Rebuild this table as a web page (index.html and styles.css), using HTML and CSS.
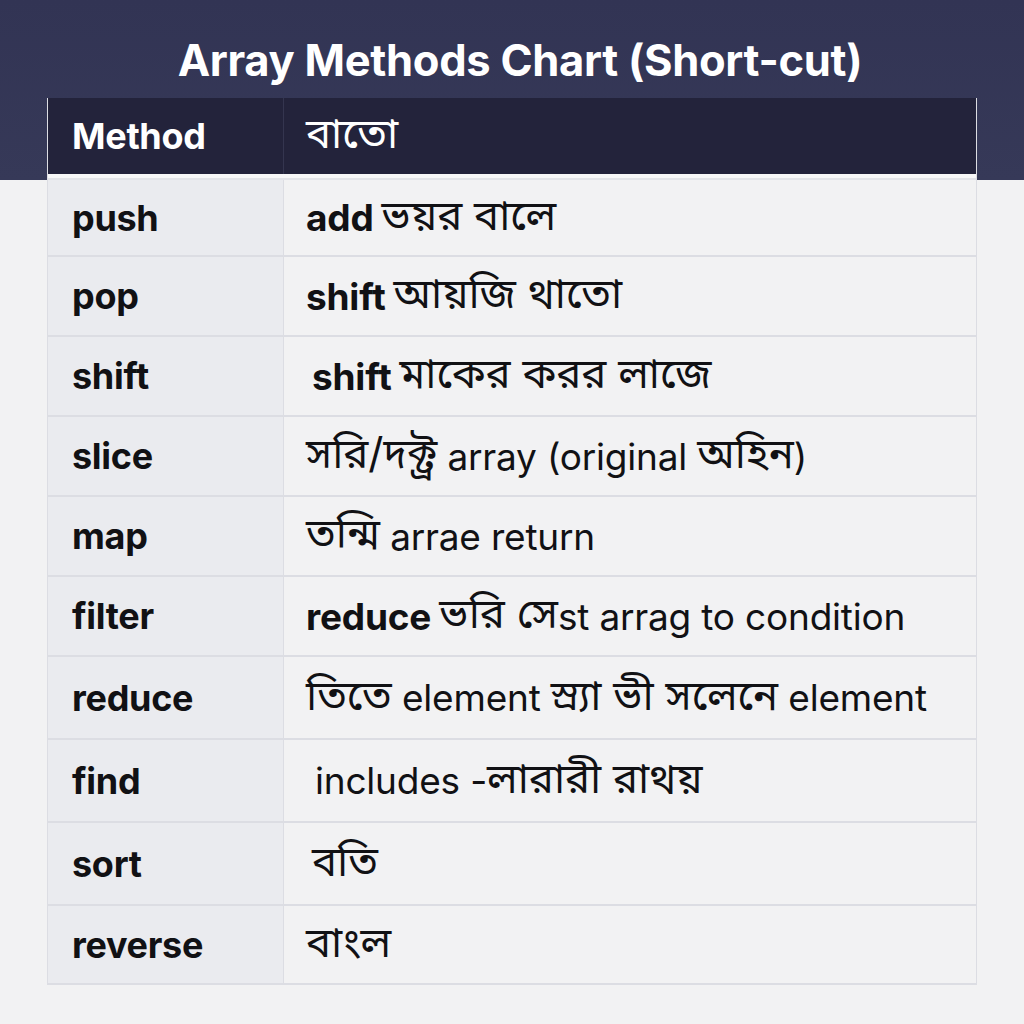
FILE: index.html
```html
<!DOCTYPE html>
<html lang="bn">
<head>
<meta charset="utf-8">
<title>Array Methods Chart</title>
<link rel="stylesheet" href="styles.css">
</head>
<body>
<div class="band"></div>
<main class="page">
  <h1 class="title">Array Methods Chart (Short-cut)</h1>
  <div class="table">
    <div class="row head">
      <div class="cell key">Method</div>
      <div class="cell val"><span class="bn">বাতো</span></div>
    </div>
    <div class="gap"></div>
    <div class="row first">
      <div class="cell key">push</div>
      <div class="cell val"><b>add</b> <span class="bn">ভয়র বালে</span></div>
    </div>
    <div class="row">
      <div class="cell key">pop</div>
      <div class="cell val"><b>shift</b> <span class="bn">আয়জি থাতো</span></div>
    </div>
    <div class="row">
      <div class="cell key">shift</div>
      <div class="cell val indent"><b>shift</b> <span class="bn">মাকের করর লাজে</span></div>
    </div>
    <div class="row">
      <div class="cell key">slice</div>
      <div class="cell val"><span class="bn">সরি/দক্র্ট</span>&nbsp;array (original&nbsp;<span class="bn">অহিন</span>)</div>
    </div>
    <div class="row">
      <div class="cell key">map</div>
      <div class="cell val"><span class="bn">তন্মি</span>&nbsp;arrae return</div>
    </div>
    <div class="row">
      <div class="cell key">filter</div>
      <div class="cell val"><b>reduce</b> <span class="bn">ভরি সে</span>st arrag to condition</div>
    </div>
    <div class="row tall">
      <div class="cell key">reduce</div>
      <div class="cell val"><span class="bn">তিতে</span>&nbsp;element&nbsp;<span class="bn">স্র্যা ভী সলেনে</span>&nbsp;element</div>
    </div>
    <div class="row tall">
      <div class="cell key">find</div>
      <div class="cell val indent2">includes -<span class="bn">লারারী রাথয়</span></div>
    </div>
    <div class="row tall">
      <div class="cell key">sort</div>
      <div class="cell val indent"><span class="bn">বতি</span></div>
    </div>
    <div class="row last">
      <div class="cell key">reverse</div>
      <div class="cell val"><span class="bn">বাংল</span></div>
    </div>
  </div>
</main>
</body>
</html>
```

FILE: styles.css
```css
html, body {
  margin: 0;
  padding: 0;
}
body {
  background: #f2f2f3;
  font-family: Inter, "Noto Sans", "Noto Sans Bengali", "Liberation Sans", sans-serif;
  color: #111114;
  position: relative;
  width: 1024px;
  height: 1024px;
  overflow: hidden;
}
.band {
  position: absolute;
  left: 0;
  top: 0;
  width: 1024px;
  height: 180px;
  background: linear-gradient(180deg, #323454 0%, #363958 100%);
}
.page {
  position: relative;
  padding: 0 47px;
}
.title {
  margin: 0;
  height: 98px;
  display: flex;
  align-items: center;
  justify-content: center;
  padding-top: 22px;
  padding-left: 16px;
  box-sizing: border-box;
  color: #ffffff;
  font-size: 43.5px;
  font-weight: 700;
  letter-spacing: -0.3px;
}
.table {
  display: flex;
  flex-direction: column;
  border-left: 1px solid #dcdde3;
  border-right: 1px solid #dcdde3;
}
.row {
  display: grid;
  grid-template-columns: 236px 1fr;
  height: 80px;
  box-sizing: border-box;
  border-bottom: 2px solid #dcdde3;
}
.row.first {
  height: 77px;
}
.row.tall {
  height: 83px;
}
.row.last {
  height: 79px;
}
.row.head {
  height: 76px;
  background: #23233b;
  border-bottom: none;
  color: #ffffff;
}
.gap {
  height: 6px;
  box-sizing: border-box;
  background: #f7f7f8;
  border-bottom: 2px solid #e2e3e8;
}
.cell {
  display: flex;
  align-items: center;
  font-size: 37px;
  white-space: nowrap;
}
.cell.key {
  padding-left: 24px;
  font-size: 36px;
  font-weight: 700;
  letter-spacing: -0.3px;
  background: #eaebef;
  border-right: 1px solid #dcdde3;
}
.row.head .cell.key {
  background: transparent;
  border-right: 1px solid #34354f;
}
.cell.val {
  padding-left: 22px;
  font-weight: 400;
  letter-spacing: -0.2px;
  background: #f2f2f3;
}
.row.head .cell.val {
  background: transparent;
}
.cell.val b {
  font-weight: 700;
  margin-right: 8px;
}
.bn {
  font-size: 42px;
  letter-spacing: 0;
}
.cell.val.indent {
  padding-left: 28px;
}
.cell.val.indent2 {
  padding-left: 31px;
}
```
